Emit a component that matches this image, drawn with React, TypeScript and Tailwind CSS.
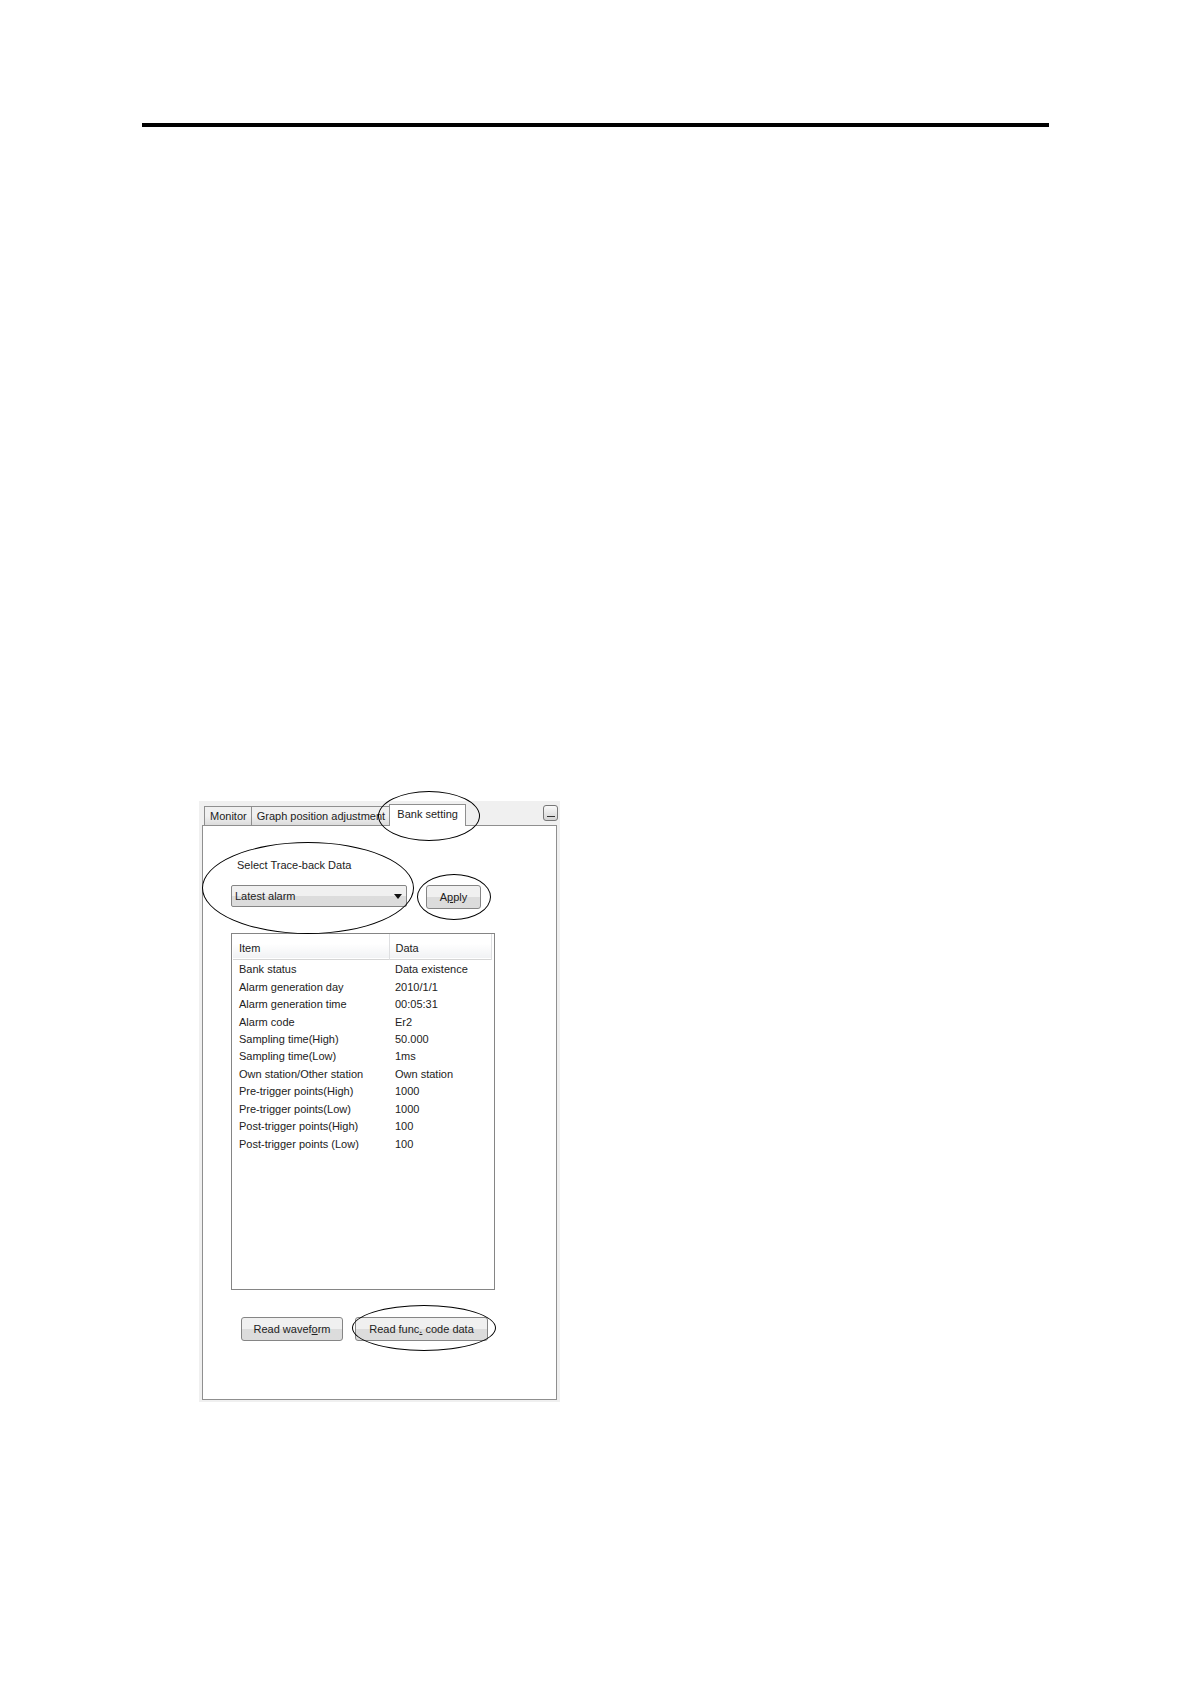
import { useState } from 'react';
import type { ReactNode } from 'react';

const tabs = ['Monitor', 'Graph position adjustment', 'Bank setting'];

const rows = [
  { item: 'Bank status', data: 'Data existence' },
  { item: 'Alarm generation day', data: '2010/1/1' },
  { item: 'Alarm generation time', data: '00:05:31' },
  { item: 'Alarm code', data: 'Er2' },
  { item: 'Sampling time(High)', data: '50.000' },
  { item: 'Sampling time(Low)', data: '1ms' },
  { item: 'Own station/Other station', data: 'Own station' },
  { item: 'Pre-trigger points(High)', data: '1000' },
  { item: 'Pre-trigger points(Low)', data: '1000' },
  { item: 'Post-trigger points(High)', data: '100' },
  { item: 'Post-trigger points (Low)', data: '100' },
];

// Callout ring that sits over a control
function Ring({ className }: { className: string }) {
  return <span aria-hidden="true" className={`pointer-events-none absolute z-10 rounded-[50%] border border-black ${className}`} />;
}

function PushButton({ className, children }: { className: string; children: ReactNode }) {
  return (
    <button
      type="button"
      className={`h-6 whitespace-nowrap rounded-[3px] border border-[#858585] bg-linear-to-b from-[#f0f0f0] from-50% to-[#dcdcdc] to-50% text-center ${className}`}
    >
      {children}
    </button>
  );
}

export default function App() {
  const [activeTab, setActiveTab] = useState('Bank setting');
  const [trace, setTrace] = useState('latest');

  return (
    <main className="bg-white px-[142px] pt-[123px] pb-[283px] font-['Liberation_Sans',Arial,sans-serif] text-[11px] leading-4 text-[#222]">
      <hr className="mr-[-1px] h-1 border-0 bg-black" />

      <section className="mt-[674px] ml-[57px] max-w-[361px] bg-[#f0f0f0] pt-[3px] pr-[3px] pb-[2px] pl-[3px]">
        <div className="flex items-end justify-between">
          <div role="tablist" className="flex items-end pl-[2px]">
            {tabs.map((tab) => {
              const active = tab === activeTab;
              return (
                <div key={tab} className="relative">
                  <button
                    type="button"
                    role="tab"
                    aria-selected={active}
                    onClick={() => setActiveTab(tab)}
                    className={
                      active
                        ? 'relative -mb-px block h-[22px] w-[77px] whitespace-nowrap border border-b-0 border-[#8f8f8f] bg-white pb-1 text-center'
                        : 'block h-[19px] whitespace-nowrap border border-r-0 border-b-0 border-[#8f8f8f] bg-linear-to-b from-[#f0f0f0] from-50% to-[#dcdcdc] pr-1 pl-[5px]'
                    }
                  >
                    {tab}
                  </button>
                  {tab === 'Bank setting' && <Ring className="-top-[13px] -left-[11px] h-[50px] w-[102px]" />}
                </div>
              );
            })}
          </div>
          <button
            type="button"
            aria-label="Minimize"
            className="-mr-px mb-1 flex h-4 w-[15px] items-end justify-center rounded-[3px] border border-[#777] bg-linear-to-b from-[#fafafa] to-[#d4d4d4] pb-[3px]"
          >
            <span className="h-px w-2 bg-[#333]" />
          </button>
        </div>

        <div className="border border-[#8f8f8f] bg-white px-7 pt-[31px] pb-[58px]">
          <div className="flex items-end">
            <div className="relative w-44">
              <label htmlFor="trace" className="block pl-[6px]">Select Trace-back Data</label>
              <div className="relative mt-3">
                <select
                  id="trace"
                  value={trace}
                  onChange={(e) => setTrace(e.target.value)}
                  className="block h-[22px] w-full appearance-none rounded-[2px] border border-[#858585] bg-linear-to-b from-[#f0f0f0] from-50% to-[#dcdcdc] to-50% pl-[3px]"
                >
                  <option value="latest">Latest alarm</option>
                </select>
                <svg viewBox="0 0 8 5" className="pointer-events-none absolute top-[9px] right-[5px] h-[5px] w-2">
                  <path d="M0 0h8L4 5z" fill="#111" />
                </svg>
              </div>
              <Ring className="-top-[15px] -left-[29px] h-[92px] w-[212px]" />
            </div>
            <div className="relative ml-[19px] -mb-[2px]">
              <PushButton className="w-[55px]">
                A<u>p</u>ply
              </PushButton>
              <Ring className="-top-[11px] -left-[9px] h-[46px] w-[74px]" />
            </div>
          </div>

          <div className="mt-[26px] h-[357px] max-w-[264px] border border-[#858585] pl-px pr-[2px]">
            <table className="w-full table-fixed border-collapse text-left">
              <thead>
                <tr className="h-[25px] border-b border-[#d5d5d5] bg-linear-to-b from-white from-40% to-[#f1f2f4]">
                  <th className="w-[156px] border-r border-[#dedfe1] p-0 pt-1 pl-[6px] font-normal">Item</th>
                  <th className="border-r border-[#dedfe1] p-0 pt-1 pl-[6px] font-normal">Data</th>
                </tr>
              </thead>
            </table>
            <table aria-label="Bank data" className="mt-px h-48 w-full table-fixed border-collapse">
              <tbody>
                {rows.map((row) => (
                  <tr key={row.item}>
                    <td className="w-[156px] p-0 pl-[6px]">{row.item}</td>
                    <td className="p-0 pl-[6px]">{row.data}</td>
                  </tr>
                ))}
              </tbody>
            </table>
          </div>

          <div className="mt-[27px] flex gap-3 pl-[10px]">
            <PushButton className="w-[102px]">
              Read wavef<u>o</u>rm
            </PushButton>
            <div className="relative">
              <PushButton className="w-[133px]">
                Read func<u>.</u> code data
              </PushButton>
              <Ring className="-top-3 -left-[3px] h-[46px] w-[144px]" />
            </div>
          </div>
        </div>
      </section>
    </main>
  );
}
